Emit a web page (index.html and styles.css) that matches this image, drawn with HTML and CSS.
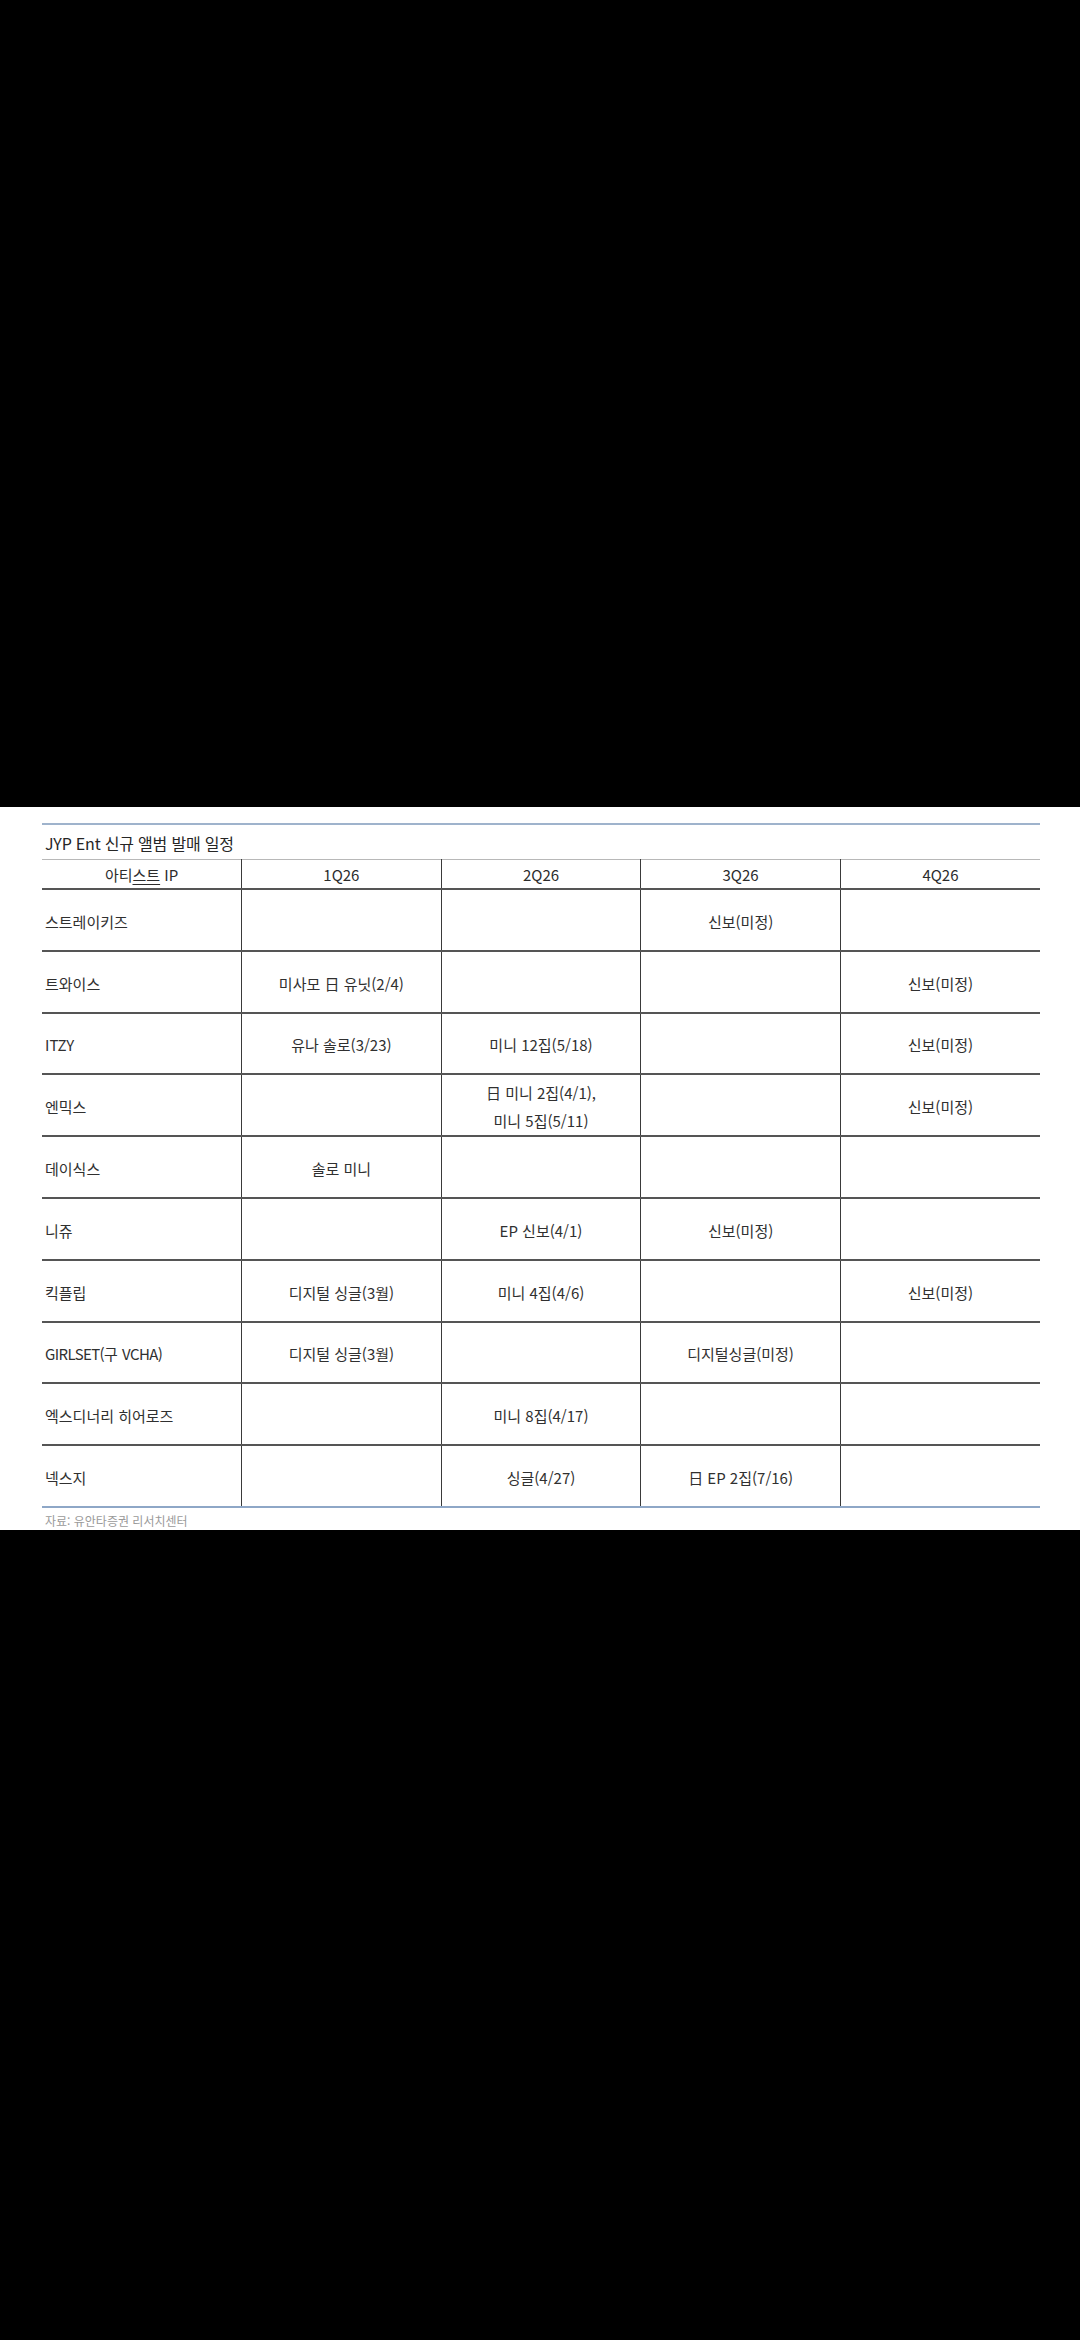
FILE: index.html
```html
<!DOCTYPE html>
<html lang="ko">
<head>
<meta charset="utf-8">
<title>JYP Ent 신규 앨범 발매 일정</title>
<link rel="stylesheet" href="styles.css">
</head>
<body>
<div class="sheet">
  <div class="title">JYP Ent 신규 앨범 발매 일정</div>
  <table class="sched">
    <thead>
      <tr>
        <th>아티<span class="ul">스트</span> IP</th>
        <th>1Q26</th>
        <th>2Q26</th>
        <th>3Q26</th>
        <th>4Q26</th>
      </tr>
    </thead>
    <tbody>
      <tr><td>스트레이키즈</td><td></td><td></td><td>신보(미정)</td><td></td></tr>
      <tr><td>트와이스</td><td>미사모 日 유닛(2/4)</td><td></td><td></td><td>신보(미정)</td></tr>
      <tr><td>ITZY</td><td>유나 솔로(3/23)</td><td>미니 12집(5/18)</td><td></td><td>신보(미정)</td></tr>
      <tr><td>엔믹스</td><td></td><td class="two">日 미니 2집(4/1),<br>미니 5집(5/11)</td><td></td><td>신보(미정)</td></tr>
      <tr><td>데이식스</td><td>솔로 미니</td><td></td><td></td><td></td></tr>
      <tr><td>니쥬</td><td></td><td>EP 신보(4/1)</td><td>신보(미정)</td><td></td></tr>
      <tr><td>킥플립</td><td>디지털 싱글(3월)</td><td>미니 4집(4/6)</td><td></td><td>신보(미정)</td></tr>
      <tr><td><span class="lat">GIRLSET(</span>구 <span class="lat">VCHA)</span></td><td>디지털 싱글(3월)</td><td></td><td>디지털싱글(미정)</td><td></td></tr>
      <tr><td>엑스디너리 히어로즈</td><td></td><td>미니 8집(4/17)</td><td></td><td></td></tr>
      <tr><td>넥스지</td><td></td><td>싱글(4/27)</td><td>日 EP 2집(7/16)</td><td></td></tr>
    </tbody>
  </table>
  <div class="source">자료: 유안타증권 리서치센터</div>
</div>
</body>
</html>
```

FILE: styles.css
```css
html, body {
  margin: 0;
  padding: 0;
  background: #000;
}

body {
  width: 1080px;
  height: 2340px;
  padding-top: 807px;
  box-sizing: border-box;
  font-family: "Noto Sans CJK KR", "Noto Sans", sans-serif;
  color: #333;
}

.sheet {
  background: #fff;
  padding: 16px 40px 1px 42px;
}

.title {
  border-top: 2px solid #9fb3cc;
  height: 34px;
  line-height: 36px;
  font-size: 16px;
  color: #262626;
  padding-left: 3px;
  letter-spacing: -0.2px;
}

.sched {
  width: 998px;
  table-layout: fixed;
  border-collapse: collapse;
  border-top: 1px solid #b8b8b8;
  font-size: 15px;
}

.sched th {
  height: 28px;
  padding: 0;
  font-weight: 400;
  text-align: center;
  color: #2c2c2c;
  border-bottom: 2px solid #555;
}

.sched td {
  height: 56.8px;
  padding: 3px 0 0;
  text-align: center;
  vertical-align: middle;
  border-bottom: 2px solid #555;
  color: #303030;
}

.sched td:first-child {
  text-align: left;
  padding-left: 3px;
}

.sched th + th,
.sched td + td {
  border-left: 1.5px solid #3a3a3a;
}

.sched tbody tr:last-child td {
  border-bottom: 2px solid #8ea7c7;
}

.sched .two {
  line-height: 28px;
}

.lat {
  letter-spacing: -0.6px;
}

.ul {
  text-decoration: underline;
  text-underline-offset: 3px;
}

.source {
  margin-top: 5px;
  padding-left: 3px;
  font-size: 12px;
  line-height: 16px;
  color: #9a9a9a;
}
```
